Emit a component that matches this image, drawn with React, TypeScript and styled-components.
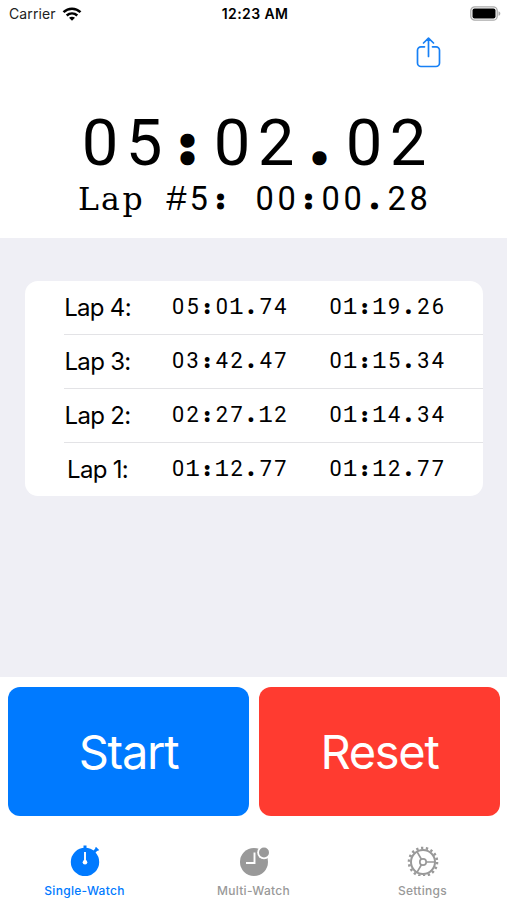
import React from "react";
import styled, { createGlobalStyle } from "styled-components";

const GlobalStyle = createGlobalStyle`
  * { box-sizing: border-box; }
  body { margin: 0; background: #fff; color: #000; font-family: Inter, "Liberation Sans", sans-serif; }
`;

const Screen = styled.div`
  width: 507px;
  height: 900px;
  display: flex;
  flex-direction: column;
  overflow: hidden;
  background: #fff;
`;

const StatusBar = styled.header`
  height: 28px;
  padding: 0 6px 1px 9px;
  display: grid;
  grid-template-columns: 1fr auto 1fr;
  align-items: center;
  svg { display: block; }
`;

const Carrier = styled.div`
  display: flex;
  align-items: center;
  gap: 6px;
  font-size: 14px;
  letter-spacing: 0.12px;
  color: #222;
`;

const Clock = styled.div`
  font-size: 14px;
  font-weight: 600;
  letter-spacing: 0.4px;
`;

const Battery = styled.div`
  justify-self: end;
`;

const Toolbar = styled.div`
  height: 78px;
  padding: 9px 66px 0 0;
  display: flex;
  justify-content: flex-end;
  align-items: flex-start;
`;

const TimerPanel = styled.section`
  height: 132px;
  padding-top: 4px;
  display: flex;
  flex-direction: column;
  align-items: center;
`;

const Mono = styled.div<{ $size: number; $line: number }>`
  font-family: "Liberation Mono", monospace;
  font-size: ${(p) => p.$size}px;
  line-height: ${(p) => p.$line}px;
  height: ${(p) => p.$line}px;
  white-space: pre;
`;

const Digit = styled.span`
  font-family: Roboto, sans-serif;
  font-size: 0.89em;
  line-height: 1px;
  margin-left: 0.064em;
  letter-spacing: 0.0486em;
`;

const Dot = styled.span`
  display: inline-block;
  width: 0.6em;
  text-align: center;
  line-height: 1px;
  span {
    font-family: "Open Sans", sans-serif;
    font-weight: 700;
    font-size: 0.62em;
    vertical-align: 0.075em;
    -webkit-text-stroke: 0.14em currentColor;
  }
`;

const Slab = styled.span`
  display: inline-block;
  width: 0.6em;
  line-height: 1px;
  text-align: center;
  span {
    font-family: "DejaVu Serif", serif;
    font-size: 0.86em;
  }
`;

function MonoText({ text, size, line }: { text: string; size: number; line: number }) {
  return (
    <Mono $size={size} $line={line}>
      {[...text].map((c, i) => {
        if (/[02-9]/.test(c)) return <Digit key={i}>{c}</Digit>;
        if (c === ":" || c === ".") return <Dot key={i}><span>{c}</span></Dot>;
        if (/[a-zA-Z]/.test(c)) return <Slab key={i}><span>{c}</span></Slab>;
        return c;
      })}
    </Mono>
  );
}

const Laps = styled.main`
  height: 439px;
  padding: 43px 24px 0 25px;
  background: #efeff5;
`;

const Card = styled.div`
  height: 215px;
  border-radius: 13px;
  background: #fff;
  display: grid;
  grid-template-rows: 53px 54px 54px 54px;
  overflow: hidden;
`;

const LapRow = styled.div`
  margin-left: 39px;
  display: grid;
  grid-template-columns: 67px 118px 118px;
  column-gap: 39.5px;
  align-items: center;
  & + & { border-top: 1px solid #e3e3e6; }
`;

const LapName = styled.div`
  font-size: 24px;
  letter-spacing: -0.7px;
  text-align: center;
  white-space: nowrap;
`;

const Actions = styled.section`
  height: 149px;
  padding: 10px 7px 10px 8px;
  display: grid;
  grid-template-columns: 1fr 1fr;
  gap: 10px;
`;

const ActionButton = styled.button<{ $color: string }>`
  border: 0;
  border-radius: 12px;
  background: ${(p) => p.$color};
  color: #fff;
  font: 400 47px Inter, sans-serif;
  letter-spacing: -1.3px;
`;

const TabBar = styled.nav`
  height: 74px;
  display: grid;
  grid-template-columns: repeat(3, 1fr);
  padding-top: 18px;
`;

const Tab = styled.div<{ $active?: boolean }>`
  display: flex;
  flex-direction: column;
  align-items: center;
  gap: 7px;
  color: ${(p) => (p.$active ? "#007aff" : "#999")};
  font-size: 12px;
  font-weight: 500;
  letter-spacing: 0.3px;
  line-height: 16px;
  svg { display: block; }
`;

const laps = [
  ["Lap 4:", "05:01.74", "01:19.26"],
  ["Lap 3:", "03:42.47", "01:15.34"],
  ["Lap 2:", "02:27.12", "01:14.34"],
  ["Lap 1:", "01:12.77", "01:12.77"],
];

const WifiIcon = () => (
  <svg width="20" height="14" viewBox="0 0 20 14" fill="none" stroke="#000" strokeWidth="2.5">
    <path d="M1.5 5.2C6.4.5 13.6.5 18.5 5.2M4.7 8.5c3.1-2.8 7.5-2.8 10.6 0" />
    <path d="M10 13.8l-3-3c1.700-1.500 4.300-1.500 6 0z" fill="#000" stroke="none" />
  </svg>
);

const BatteryIcon = () => (
  <svg width="31" height="15" viewBox="0 0 31 15">
    <rect x=".8" y=".8" width="26.400" height="13.400" rx="4" fill="#fff" stroke="#aaa" strokeWidth="1.300" />
    <rect x="2.500" y="2.600" width="23" height="9.800" rx="2" fill="#000" />
    <path d="M28.500 5.200c2.400.8 2.400 3.800 0 4.600z" fill="#aaa" />
  </svg>
);

const ShareIcon = () => (
  <svg width="25" height="31" viewBox="0 0 25 31" fill="none" stroke="#1780f5" strokeWidth="1.700" strokeLinecap="round" strokeLinejoin="round">
    <path d="M8.500 9.800H5a3.500 3.500 0 0 0-3.500 3.500V26A3.500 3.500 0 0 0 5 29.500h15a3.500 3.500 0 0 0 3.500-3.500V13.300A3.500 3.500 0 0 0 20 9.800h-3.500M12.500 19.500V1.500M7.500 6l5-4.800 5 4.800" />
  </svg>
);

const StopwatchIcon = () => (
  <svg width="30" height="32" viewBox="0 0 30 32">
    <circle cx="15" cy="18" r="14.200" fill="currentColor" />
    <path d="M15 5V1.500M24 8l3-3" stroke="currentColor" strokeWidth="3" />
    <path d="M25.500 3.500l3 3" stroke="currentColor" strokeWidth="1.700" />
    <path d="M15 8v9" stroke="#fff" strokeWidth="1.900" />
    <circle cx="15" cy="18.200" r="2.300" fill="#fff" />
  </svg>
);

const MultiIcon = () => (
  <svg width="32" height="32" viewBox="0 0 32 32">
    <circle cx="16" cy="18" r="14" fill="currentColor" />
    <circle cx="26" cy="8.500" r="6.800" fill="#fff" />
    <circle cx="26" cy="8.500" r="5" fill="currentColor" />
    <path d="M16.500 8.500v10.500H8" fill="none" stroke="#fff" strokeWidth="1.900" />
  </svg>
);

const GearIcon = () => (
  <svg width="32" height="32" viewBox="0 0 32 32" fill="none" stroke="currentColor">
    <circle cx="16" cy="18" r="14" strokeWidth="2.600" strokeDasharray="2.300 2.587" />
    <circle cx="16" cy="18" r="12" strokeWidth="2" />
    <circle cx="16" cy="18" r="3.200" strokeWidth="1.700" />
    <path d="M19.200 18H28M14.400 15.200L10 7.600M14.400 20.800L10 28.400" strokeWidth="1.700" />
  </svg>
);

export default function App() {
  return (
    <>
      <GlobalStyle />
      <Screen>
        <StatusBar>
          <Carrier>Carrier <WifiIcon /></Carrier>
          <Clock>12:23 AM</Clock>
          <Battery><BatteryIcon /></Battery>
        </StatusBar>
        <Toolbar><ShareIcon /></Toolbar>
        <TimerPanel>
          <MonoText text="05:02.02" size={73.3} line={72} />
          <MonoText text="Lap #5: 00:00.28" size={36.67} line={37} />
        </TimerPanel>
        <Laps>
          <Card>
            {laps.map(([name, total, split]) => (
              <LapRow key={name}>
                <LapName>{name}</LapName>
                <MonoText text={total} size={24.4} line={27} />
                <MonoText text={split} size={24.4} line={27} />
              </LapRow>
            ))}
          </Card>
        </Laps>
        <Actions>
          <ActionButton $color="#007aff">Start</ActionButton>
          <ActionButton $color="#ff3b30">Reset</ActionButton>
        </Actions>
        <TabBar>
          <Tab $active><StopwatchIcon />Single-Watch</Tab>
          <Tab><MultiIcon />Multi-Watch</Tab>
          <Tab><GearIcon />Settings</Tab>
        </TabBar>
      </Screen>
    </>
  );
}
